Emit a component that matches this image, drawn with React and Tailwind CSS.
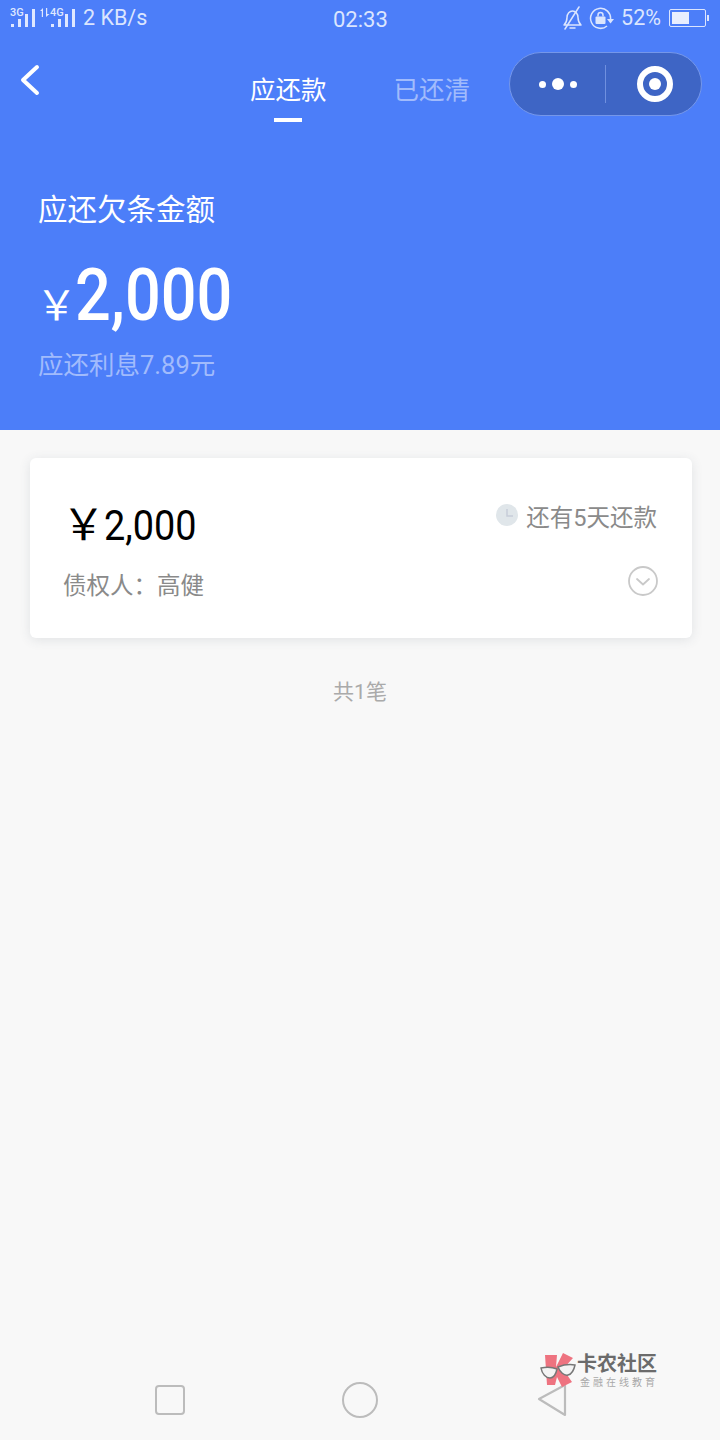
const cjk = { fontFamily: 'Roboto, "Noto Sans CJK SC", sans-serif' };
const han = { fontFamily: '"Noto Sans CJK SC", sans-serif' };

function Signal({ label }) {
  return (
    <div className="relative w-[25px] h-[18px]">
      <span className="absolute -left-[1px] -top-[1px] text-[11px] leading-[10px] font-medium text-[#dfe8ff]">{label}</span>
      <div className="absolute left-0 bottom-0 flex items-end gap-[4px]">
        <div className="w-[3px] h-[3px] bg-[#dfe8ff]" />
        <div className="w-[3px] h-[8px] bg-[#dfe8ff]" />
        <div className="w-[3px] h-[13px] bg-[#dfe8ff]" />
        <div className="w-[3px] h-[18px] bg-[#dfe8ff]" />
      </div>
    </div>
  );
}

function StatusBar() {
  return (
    <div className="relative flex items-center justify-between h-[36px] pl-[11px] pr-[11px] text-[21.500px] leading-none text-[#dbe5fe]" style={cjk}>
      <div className="flex items-center">
        <Signal label="3G" />
        <svg className="ml-[4px] mb-[11px]" width="10" height="9" viewBox="0 0 10 9" fill="#dfe8ff">
          <path d="M3 0v9H1.800V3H0zM6 0h1.200v6H9.500L6 9z" />
        </svg>
        <div className="w-[1px]" />
        <Signal label="4G" />
        <span className="ml-[7px]">2 KB/s</span>
      </div>
      <span className="absolute left-[333px] top-[9px] text-[22px]">02:33</span>
      <div className="flex items-center">
        <svg width="22" height="24" viewBox="0 0 22 24" fill="none" stroke="#dbe5fe" strokeWidth="1.500" strokeLinejoin="round" strokeLinecap="round">
          <path d="M2 19c1.700-1.600 3-3.500 3-7.500C5 7.500 7.700 5 10.500 5S16 7.500 16 11.500c0 4 1.300 5.900 3 7.500z" />
          <path d="M8 22h5M3 23 17 1" />
        </svg>
        <svg className="ml-[5px]" width="26" height="24" viewBox="0 0 26 24" fill="none">
          <path d="M21.500 13.500A10 10 0 1 0 18 20" stroke="#dbe5fe" strokeWidth="1.500" />
          <path d="M18 13h7l-3.500 4.500z" fill="#dbe5fe" />
          <rect x="6.500" y="10.500" width="10" height="7.500" rx="1" fill="#dbe5fe" />
          <path d="M9 10.500V9a2.500 2.500 0 0 1 5 0v1.500" stroke="#dbe5fe" strokeWidth="1.500" />
        </svg>
        <span className="ml-[6px]">52%</span>
        <div className="ml-[8px] flex items-center">
          <div className="w-[37px] h-[18px] rounded-[2px] border border-[#dbe5fe] p-[2px]">
            <div className="w-[17px] h-full bg-[#e8eefe]" />
          </div>
          <div className="ml-[1px] w-[2px] h-[6px] bg-[#dbe5fe]" />
        </div>
      </div>
    </div>
  );
}

function NavBar() {
  return (
    <div className="relative flex items-start h-[94px] pr-[18px]">
      <svg className="mt-[28px] ml-[20px]" width="22" height="32" viewBox="0 0 22 32" fill="none" stroke="#fff" strokeWidth="4" strokeLinecap="round" strokeLinejoin="round">
        <path d="M17 3 3 16l14 13" />
      </svg>
      <div className="ml-[208px] flex gap-[67px] pt-[34px] text-[25.500px] leading-[40px]" style={cjk}>
        <div className="flex flex-col items-center text-white">
          <span>应还款</span>
          <div className="mt-[8px] w-[28px] h-[4px] bg-white" />
        </div>
        <span className="text-[#a1bbfc]">已还清</span>
      </div>
      <div className="ml-auto mt-[16px] w-[193px] h-[64px] rounded-full bg-[#3e65c5] border border-[#7597ea] flex items-center">
        <div className="w-[95px] flex items-center justify-center gap-[6px]">
          <div className="w-[7px] h-[7px] rounded-full bg-white" />
          <div className="w-[12px] h-[12px] rounded-full bg-white" />
          <div className="w-[7px] h-[7px] rounded-full bg-white" />
        </div>
        <div className="w-px h-[38px] bg-[#7090df]" />
        <div className="flex-1 flex items-center justify-center pl-[3px]">
          <div className="w-[36px] h-[36px] rounded-full border-[6px] border-white flex items-center justify-center">
            <div className="w-[12px] h-[12px] rounded-full bg-white" />
          </div>
        </div>
      </div>
    </div>
  );
}

function Summary() {
  return (
    <div className="pl-[38px]" style={cjk}>
      <div className="mt-[58px] text-[29.500px] leading-[44px] text-white">应还欠条金额</div>
      <div className="mt-[24px] flex items-baseline h-[80px]">
        <span className="-ml-[2px] w-[39px] shrink-0 text-[41px] leading-[80px] text-white" style={han}>￥</span>
        <span className="text-[72px] leading-[80px] font-medium text-white origin-left scale-x-[0.875] inline-block">2,000</span>
      </div>
      <div className="mt-[10px] text-[25.500px] leading-[38px] text-[#a1bbfc]">应还利息7.89元</div>
    </div>
  );
}

function Card() {
  return (
    <div className="ml-[30px] mr-[28px] mt-[28px] h-[180px] rounded-[6px] bg-white shadow-[0_2px_12px_rgba(60,70,90,0.12)] pl-[33px] pr-[35px] flex justify-between" style={cjk}>
      <div>
        <div className="mt-[38px] flex items-baseline h-[50px] text-black leading-[50px]">
          <span className="-ml-[1px] w-[42px] shrink-0 text-[43px]" style={han}>￥</span>
          <span className="text-[42px] origin-left scale-x-[0.9] inline-block">2,000</span>
        </div>
        <div className="mt-[23px] text-[23.500px] leading-[34px] text-[#8a8a8a]">债权人：高健</div>
      </div>
      <div className="flex flex-col items-end">
        <div className="mt-[42px] flex items-start">
          <div className="relative mt-[4px] w-[22px] h-[22px] rounded-full bg-[#e0e6ea]">
            <svg className="absolute inset-0" width="22" height="22" viewBox="0 0 22 22" fill="none" stroke="#c6cdd9" strokeWidth="1.500">
              <path d="M11 5v7h6" />
            </svg>
          </div>
          <span className="ml-[8px] text-[23.500px] leading-[36px] text-[#8a8a8a]">还有5天还款</span>
        </div>
        <svg className="mt-[30px] -mr-[1px]" width="30" height="30" viewBox="0 0 30 30" fill="none" stroke="#c9c9c9" strokeWidth="1.800">
          <circle cx="15" cy="15" r="14" />
          <path d="M9 13l6 5.500 6-5.500" strokeLinecap="round" strokeLinejoin="round" />
        </svg>
      </div>
    </div>
  );
}

function Watermark() {
  return (
    <div className="absolute left-[540px] top-[1352px] flex items-start" style={cjk}>
      <svg width="36" height="38" viewBox="0 0 36 38">
        <path d="M5 3h12l-1 12 7-14 10 5-10 11 9 13-10 5-5-10-2 8H7l-1-15z" fill="#ee7380" />
        <path d="M1 16c5-1 11-1 16 1-1 5-3 9-7 9s-8-4-9-10z" fill="#f4f4f4" stroke="#777" strokeWidth="1.500" />
        <path d="M18 15c5-2 11-3 17-2-1 5-3 9-7 10s-8-3-10-8z" fill="#f4f4f4" stroke="#777" strokeWidth="1.500" />
      </svg>
      <div className="ml-[1px] flex flex-col">
        <span className="text-[20px] leading-[25px] font-bold text-[#6b6b6b]">卡农社区</span>
        <span className="ml-[3px] text-[10px] leading-[12px] tracking-[3px] text-[#a8a8a8] whitespace-nowrap">金融在线教育</span>
      </div>
    </div>
  );
}

function NavKeys() {
  return (
    <div className="absolute left-0 right-0 bottom-[22px] h-[36px] flex items-center">
      <div className="ml-[155px] w-[30px] h-[30px] rounded-[4px] border-[2px] border-[#bcbcbc]" />
      <div className="ml-[157px] w-[36px] h-[36px] rounded-full border-[2px] border-[#bcbcbc]" />
      <svg className="ml-[159px]" width="32" height="36" viewBox="0 0 32 36" fill="none" stroke="#bcbcbc" strokeWidth="2.200" strokeLinejoin="round">
        <path d="M28 3v30L2 17z" />
      </svg>
    </div>
  );
}

export default function App() {
  return (
    <div className="relative w-[720px] h-[1440px] bg-[#f8f8f8] overflow-hidden">
      <div className="h-[430px] bg-[#4c7ef9]">
        <StatusBar />
        <NavBar />
        <Summary />
      </div>
      <Card />
      <div className="mt-[38px] text-center text-[21px] leading-[32px] text-[#aaaaaa]" style={cjk}>共1笔</div>
      <NavKeys />
      <Watermark />
    </div>
  );
}
